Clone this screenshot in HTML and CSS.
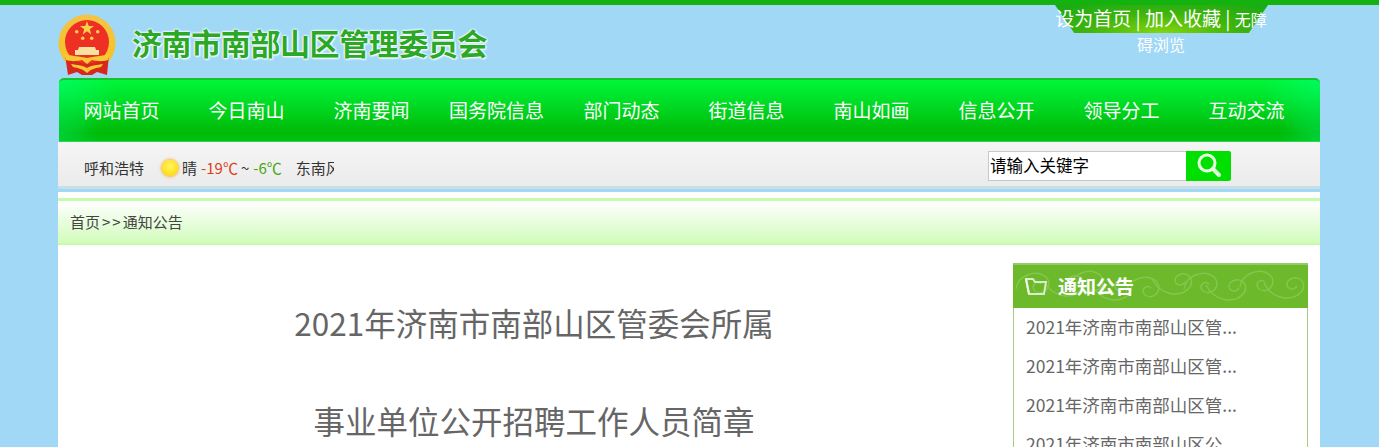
FILE: index.html
```html
<!DOCTYPE html>
<html lang="zh-CN">
<head>
    <meta charset="UTF-8">
    <meta name="viewport" content="width=device-width, initial-scale=1.0">
    <title>济南市南部山区管理委员会</title>
    <link rel="stylesheet" href="styles.css">
</head>
<body>
    <div class="topline"></div>
    <div class="wrap">
        <div class="header">
            <div class="logo">
                <svg class="emblem" width="60" height="62" viewBox="0 0 60 62">
                    <defs>
                        <linearGradient id="ringGold" x1="0" y1="0" x2="0" y2="1">
                            <stop offset="0" stop-color="#f4c443"/>
                            <stop offset="1" stop-color="#f7c21f"/>
                        </linearGradient>
                    </defs>
                    <circle cx="29" cy="29" r="28.500" fill="url(#ringGold)"/>
                    <path d="M7 41 L10 61 L19 58 L24 61 L34 61 L39 58 L49 61 L51 41 Z" fill="#d8281e"/>
                    <circle cx="29" cy="28" r="22" fill="#ee2f24"/>
                    <polygon points="29,7 30.700,12 36,12 31.800,15.200 33.300,20.500 29,17.300 24.700,20.500 26.200,15.200 22,12 27.300,12" fill="#f8d34a"/>
                    <circle cx="18.700" cy="17.700" r="1.800" fill="#f8d34a"/>
                    <circle cx="39.700" cy="17.700" r="1.800" fill="#f8d34a"/>
                    <circle cx="24.700" cy="24.300" r="1.800" fill="#f8d34a"/>
                    <circle cx="33.700" cy="24.300" r="1.800" fill="#f8d34a"/>
                    <path d="M21 33 H37 L38 36 H41 V41 H17 V36 H20 Z" fill="#f9e2a0"/>
                    <path d="M6 39 C14 43 22 42 29 44 C36 42 44 43 52 39 L50 46 C44 48 38 47 34 46 L29 50 L24 46 C20 47 14 48 8 46 Z" fill="#f6c935"/>
                    <path d="M13 50 C19 51 24 51 29 54 C34 51 39 51 45 50 L43 53 C38 54 33 55 29 59 C25 55 20 54 15 53 Z" fill="#f6c935"/>
                </svg>
                <span class="sitename">济南市南部山区管理委员会</span>
            </div>
            <div class="toplinks">
                <a href="#">设为首页</a> | <a href="#">加入收藏</a> | <a href="#" class="small">无障碍浏览</a>
            </div>
        </div>

        <ul class="nav">
            <li><a href="#">网站首页</a></li>
            <li><a href="#">今日南山</a></li>
            <li><a href="#">济南要闻</a></li>
            <li><a href="#">国务院信息</a></li>
            <li><a href="#">部门动态</a></li>
            <li><a href="#">街道信息</a></li>
            <li><a href="#">南山如画</a></li>
            <li><a href="#">信息公开</a></li>
            <li><a href="#">领导分工</a></li>
            <li><a href="#">互动交流</a></li>
        </ul>

        <div class="toolbar">
            <div class="weather">
                <span class="city">呼和浩特</span>
                <span class="sun"></span>
                <span class="sky">晴</span>
                <span class="low">-19℃</span>
                <span class="tilde">~</span>
                <span class="high">-6℃</span>
                <span class="wind">东南风</span>
            </div>
            <form class="search">
                <input type="text" class="search-input" value="请输入关键字">
                <button type="button" class="search-btn">
                    <svg width="28" height="26" viewBox="0 0 28 26">
                        <circle cx="12" cy="10" r="8" fill="none" stroke="#e4ffe0" stroke-width="3"/>
                        <path d="M18 16 L24 22" stroke="#e4ffe0" stroke-width="4" stroke-linecap="round"/>
                    </svg>
                </button>
            </form>
        </div>

        <div class="page">
            <div class="crumb">首页<span class="arrows">&gt;&gt;</span>通知公告</div>
            <div class="content">
                <div class="article">
                    <p class="headline">2021年济南市南部山区管委会所属</p>
                    <p class="headline">事业单位公开招聘工作人员简章</p>
                </div>
                <div class="side">
                    <div class="side-title">
                        <svg class="swirls" width="293" height="43" viewBox="0 0 293 43">
                            <defs>
                                <path id="swirl" d="M0 20 C2 6 20 0 30 8 C38 16 28 28 19 22 C14 17 20 11 25 15"/>
                                <path id="swirl2" d="M0 8 C8 24 28 28 38 16 C44 6 32 -2 24 6 C20 13 29 17 33 11"/>
                            </defs>
                            <g fill="none" stroke="#a2d877" stroke-width="1.500" opacity="0.45">
                                <use href="#swirl" x="2" y="4"/>
                                <use href="#swirl2" x="30" y="8"/>
                                <use href="#swirl" x="56" y="2"/>
                                <use href="#swirl2" x="78" y="12"/>
                                <use href="#swirl" x="112" y="8"/>
                                <use href="#swirl2" x="138" y="6"/>
                                <use href="#swirl" x="170" y="4"/>
                                <use href="#swirl2" x="192" y="12"/>
                                <use href="#swirl" x="226" y="2"/>
                                <use href="#swirl2" x="250" y="10"/>
                            </g>
                        </svg>
                        <svg class="folder" width="24" height="24" viewBox="0 0 24 24">
                            <path d="M2 6 H9 L11 9 H22 L20 21 H5 Z" fill="none" stroke="#d8eec4" stroke-width="2"/>
                            <path d="M2 6 L5 21" stroke="#eef8e4" stroke-width="2"/>
                        </svg>
                        <span>通知公告</span>
                    </div>
                    <ul class="side-list">
                        <li><a href="#">2021年济南市南部山区管...</a></li>
                        <li><a href="#">2021年济南市南部山区管...</a></li>
                        <li><a href="#">2021年济南市南部山区管...</a></li>
                        <li><a href="#">2021年济南市南部山区公...</a></li>
                    </ul>
                </div>
            </div>
        </div>
    </div>
</body>
</html>
```

FILE: styles.css
```css
* {
    margin: 0;
    padding: 0;
    box-sizing: border-box;
}

html, body {
    height: 447px;
    overflow: hidden;
}

body {
    font-family: "Noto Sans CJK SC", "Liberation Sans", sans-serif;
    background: #a0d8f6;
}

a {
    color: inherit;
    text-decoration: none;
}

ul {
    list-style: none;
}

.topline {
    height: 5px;
    background: #14b20f;
}

.wrap {
    width: 1262px;
    margin-left: 58px;
}

/* header */
.header {
    height: 73px;
    display: flex;
    justify-content: space-between;
}

.logo {
    display: flex;
    align-items: flex-start;
    padding-top: 9px;
}

.emblem {
    display: block;
}

.sitename {
    margin: 8px 0 0 14px;
    font-size: 30px;
    line-height: 40px;
    font-weight: 700;
    letter-spacing: -0.4px;
    color: #2aa826;
    white-space: nowrap;
    text-shadow: 0 0 2px #fff, 0 0 2px #fff, 0 0 3px #fff, 1px 1px 2px #fff;
}

.toplinks {
    position: relative;
    z-index: 0;
    width: 216px;
    height: 28px;
    margin-right: 51px;
    padding-top: 1px;
    font-size: 19px;
    line-height: 23px;
    text-align: center;
    color: #fff;
}

/* green tab behind the links */
.toplinks::before {
    content: "";
    position: absolute;
    z-index: -1;
    left: 2px;
    top: 0;
    width: 213px;
    height: 28px;
    background: radial-gradient(ellipse at 50% 100%, #84d60c 0%, #3eb40e 50%, #16a914 100%);
    clip-path: polygon(0 0, 100% 0, 91% 100%, 9% 100%);
}

.toplinks .small {
    font-size: 16px;
}

/* nav */
.nav {
    height: 64px;
    margin-left: 1px;
    display: flex;
    border-top: 2px solid #18c22c;
    border-bottom: 1px solid #2ed84e;
    border-radius: 5px 5px 0 0;
    background:
        radial-gradient(ellipse 60px 60px at 0 0, rgba(0, 255, 120, 0.55), rgba(0, 255, 120, 0) 100%),
        radial-gradient(ellipse 60px 60px at 100% 0, rgba(0, 255, 120, 0.55), rgba(0, 255, 120, 0) 100%),
        radial-gradient(ellipse 40px 40px at 0 100%, rgba(0, 220, 80, 0.6), rgba(0, 220, 80, 0) 100%),
        radial-gradient(ellipse 40px 40px at 100% 100%, rgba(0, 220, 80, 0.6), rgba(0, 220, 80, 0) 100%),
        linear-gradient(#00f636 0%, #00e22a 30%, #00bb08 85%, #00c010 100%);
}

.nav li {
    width: 125px;
    text-align: center;
    font-size: 19px;
    line-height: 59px;
    color: #fff;
    white-space: nowrap;
}

/* weather and search */
.toolbar {
    height: 47px;
    display: flex;
    justify-content: space-between;
    padding: 8px 89px 0 26px;
    border-bottom: 3px solid #c9dfe6;
    background: linear-gradient(#f5f5f5, #ebebeb);
}

.weather {
    width: 250px;
    height: 34px;
    display: flex;
    align-items: center;
    font-size: 15px;
    color: #333;
    white-space: nowrap;
    overflow: hidden;
}

.sun {
    flex: none;
    width: 16px;
    height: 16px;
    margin: 2px 4px 0 18px;
    border-radius: 50%;
    background: radial-gradient(circle at 50% 40%, #fff36a 0%, #ffe21c 60%, #ffbf10 100%);
    box-shadow: 0 0 3px 1px #f5b531;
}

.low {
    margin-left: 4px;
    color: #d9401a;
}

.tilde {
    margin: 0 4px 0 3px;
}

.high {
    color: #4aa514;
}

.wind {
    margin-left: 14px;
}

.search {
    display: flex;
    height: 30px;
    margin-top: 1px;
}

.search-input {
    width: 198px;
    height: 30px;
    padding: 0 0 2px 1px;
    border: 1px solid #c8c8c8;
    border-right: none;
    font-family: inherit;
    font-size: 16.500px;
    color: #000;
    background: #fff;
}

.search-btn {
    width: 45px;
    height: 30px;
    border: none;
    border-radius: 0 2px 2px 0;
    background: #00e000;
    display: flex;
    align-items: center;
    justify-content: center;
}

/* page */
.page {
    margin-top: 3px;
    padding-top: 6px;
    background: #fff;
    height: 300px;
}

.crumb {
    height: 47px;
    padding-left: 12px;
    font-size: 15px;
    line-height: 42px;
    color: #444;
    border-top: 3px solid #c4fdaa;
    border-bottom: 2px solid #c4fdaa;
    background: linear-gradient(#fff, #d2fcbc);
}

.arrows {
    margin-left: 2px;
    letter-spacing: 2px;
}

.content {
    display: flex;
    padding-top: 18px;
}

.article {
    width: 952px;
    padding-top: 36px;
    text-align: center;
}

.headline {
    font-size: 31.500px;
    line-height: 46px;
    margin-bottom: 52px;
    color: #666;
    white-space: nowrap;
}

.side {
    width: 295px;
    margin-left: 3px;
}

.side-title {
    position: relative;
    height: 45px;
    display: flex;
    align-items: center;
    padding: 0 0 3px 11px;
    font-size: 19px;
    font-weight: 700;
    color: #fff;
    border-top: 2px solid #93cc62;
    background: #6cb92c;
}

.swirls {
    position: absolute;
    left: 1px;
    top: 0;
}

.folder {
    position: relative;
    margin-right: 10px;
}

.side-title span {
    position: relative;
}

.side-list {
    height: 200px;
    padding-left: 12px;
    border: 1px solid #a9c98a;
    border-top: none;
}

.side-list li {
    height: 39px;
    font-size: 17.500px;
    line-height: 37px;
    color: #666;
}
```
